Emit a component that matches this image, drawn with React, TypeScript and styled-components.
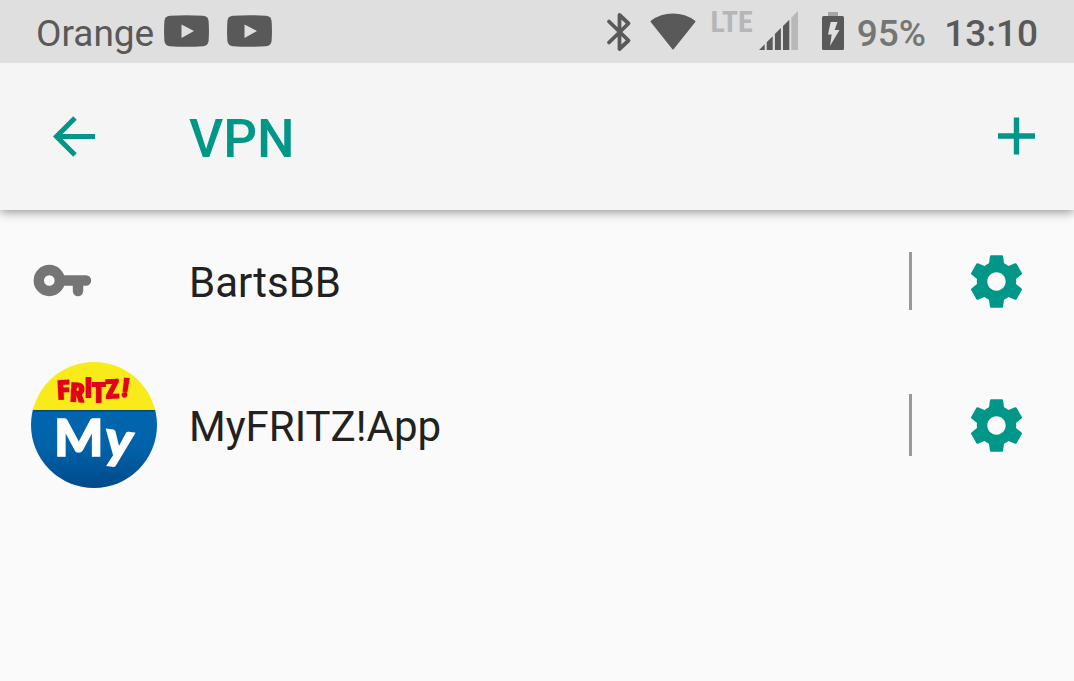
import React from 'react';
import styled, { createGlobalStyle } from 'styled-components';

const GlobalStyle = createGlobalStyle`
  * { box-sizing: border-box; }
  body {
    margin: 0;
    background: #fafafa;
    color: #212121;
    font-family: Roboto, "Liberation Sans", sans-serif;
  }
  svg { display: block; flex: none; }
`;

const StatusBar = styled.header`
  position: relative;
  z-index: 1;
  display: flex;
  align-items: center;
  justify-content: space-between;
  height: 63px;
  padding: 0 36px;
  background: #dfdfdf;
  color: #595959;
`;

const StatusGroup = styled.div<{ $gap: number }>`
  display: flex;
  align-items: center;
  gap: ${(p) => p.$gap}px;
`;

const StatusText = styled.span<{ $weight?: number; $color?: string }>`
  padding-top: 4px;
  font-size: 37px;
  line-height: 44px;
  font-weight: ${(p) => p.$weight ?? 500};
  color: ${(p) => p.$color ?? 'inherit'};
`;

const Carrier = styled(StatusText)`
  margin-right: 10px;
`;

const NetworkType = styled.span`
  align-self: flex-start;
  font-family: "Roboto Condensed", "Liberation Sans Narrow", Roboto, sans-serif;
  font-size: 30px;
  line-height: 22px;
  font-weight: 700;
  color: #b6b6b6;
`;

const Toolbar = styled.nav`
  display: flex;
  align-items: center;
  height: 147px;
  padding: 0 27px 0 44px;
  background: #f5f5f5;
  color: #009688;
  box-shadow: 0 2px 10px rgba(0, 0, 0, 0.42);
`;

const Title = styled.h1`
  flex: 1;
  margin: 0;
  padding: 4px 0 0 85px;
  font-size: 53px;
  line-height: 60px;
  font-weight: 500;
`;

const IconButton = styled.button`
  display: flex;
  align-items: center;
  justify-content: center;
  padding: 0;
  border: 0;
  background: none;
  color: #009688;
  cursor: pointer;
`;

const List = styled.ul`
  margin: 0;
  padding: 0;
  list-style: none;
`;

const Row = styled.li`
  display: flex;
  align-items: center;
  min-height: 142px;
  padding-right: 46px;
`;

const IconCell = styled.div`
  flex: none;
  width: 189px;
  padding: 10px 0 10px 31px;
`;

const Name = styled.span`
  flex: 1;
  padding-top: 4px;
  font-size: 42px;
  line-height: 50px;
`;

const Divider = styled.span`
  align-self: stretch;
  width: 3px;
  margin: 42px 53px 42px 0;
  background: #999;
`;

const YoutubeIcon = () => (
  <svg width="45" height="34" viewBox="0 0 45 34" aria-hidden="true">
    <path fill="#595959" d="M6 .8Q22 -.4 39 .8Q44 1.200 44.600 6Q45.300 16 44.600 26Q44 30.800 39 31.200Q22 32.400 6 31.200Q1 30.800 .4 26Q-.3 16 .4 6Q1 1.200 6 .8Z" />
    <path fill="#dfdfdf" d="M17.500 9.500L30 16L17.500 23Z" />
  </svg>
);

const BluetoothIcon = () => (
  <svg width="26" height="40" viewBox="0 0 26 40" aria-hidden="true" fill="none" stroke="#595959" strokeWidth="3.800" strokeLinecap="round" strokeLinejoin="round">
    <path d="M3 9.500L22.500 28.500L13.500 37V3L22.500 11.500L3 30.500" />
  </svg>
);

const WifiIcon = () => (
  <svg width="46" height="40" viewBox="0 0 46 40" aria-hidden="true">
    <path fill="#595959" stroke="#595959" strokeWidth="2" strokeLinejoin="round" d="M1.500 9.500Q11 2.500 23 2.500Q35 2.500 44.500 9.500L23 36.500Z" />
  </svg>
);

const SignalIcon = () => (
  <svg width="39" height="42" viewBox="0 0 39 42" aria-hidden="true">
    <path fill="#595959" d="M0 39L5.700 33.300V39ZM7.700 31.300L13.700 25.300V39H7.700ZM15.900 23.100L21.900 17.100V39H15.900ZM24 15L30.300 8.700V39H24Z" />
    <path fill="#b8b8b8" d="M32.300 6.700L39 0V39H32.300Z" />
  </svg>
);

const BatteryIcon = () => (
  <svg width="22" height="40" viewBox="0 0 22 40" aria-hidden="true">
    <path fill="#a6a6a6" d="M6 0H16V5H6Z" />
    <rect y="4" width="22" height="34" rx="1.500" fill="#595959" />
    <path fill="#dfdfdf" d="M8.700 10H15.500L12.700 18H17.500L8 34L9.700 22.500H6Z" />
  </svg>
);

const BackIcon = () => (
  <svg width="60" height="60" viewBox="0 0 60 60" aria-hidden="true" fill="none" stroke="currentColor" strokeWidth="5">
    <path d="M51 29.500H13M31 11L12.500 29.500L31 48" />
  </svg>
);

const PlusIcon = () => (
  <svg width="60" height="60" viewBox="0 0 60 60" aria-hidden="true" fill="none" stroke="currentColor" strokeWidth="5.400">
    <path d="M29.500 10.500V47.500M11 29H48" />
  </svg>
);

const GearIcon = () => (
  <svg width="63" height="63" viewBox="0 0 24 24" aria-hidden="true" fill="currentColor">
    <path d="M19.430 12.980c.04-.32.07-.64.07-.98s-.03-.66-.07-.98l2.110-1.650c.19-.15.24-.42.12-.64l-2-3.460c-.12-.22-.39-.3-.61-.22l-2.490 1c-.52-.4-1.080-.73-1.690-.98l-.38-2.650C14.460 2.180 14.250 2 14 2h-4c-.25 0-.46.18-.49.42l-.38 2.650c-.61.25-1.170.59-1.690.98l-2.490-1c-.23-.09-.49 0-.61.22l-2 3.460c-.13.22-.07.49.12.64l2.110 1.650c-.04.32-.07.65-.07.98s.03.66.07.98l-2.110 1.650c-.19.15-.24.42-.12.64l2 3.460c.12.22.39.3.61.22l2.490-1c.52.4 1.080.73 1.690.98l.38 2.650c.03.24.24.42.49.42h4c.25 0 .46-.18.49-.42l.38-2.650c.61-.25 1.170-.59 1.690-.98l2.490 1c.23.09.49 0 .61-.22l2-3.460c.12-.22.07-.49-.12-.64l-2.110-1.650zM12 15.500c-1.930 0-3.500-1.570-3.500-3.500s1.570-3.500 3.500-3.500 3.500 1.570 3.500 3.500-1.570 3.500-3.500 3.500z" />
  </svg>
);

const KeyIcon = () => (
  <svg width="63" height="34" viewBox="0 0 63 34" aria-hidden="true" fill="none" stroke="#757575" strokeWidth="10.400">
    <circle cx="18.300" cy="16.500" r="10.500" />
    <path strokeLinecap="round" d="M32 16.500H55M47 17V27" />
  </svg>
);

const MyFritzIcon = () => (
  <svg width="126" height="126" viewBox="0 0 126 126" role="img" aria-label="MyFRITZ!App">
    <defs>
      <clipPath id="disc"><circle cx="63" cy="63" r="63" /></clipPath>
      <linearGradient id="blue" x1="0" y1="0" x2="0" y2="1">
        <stop offset="0" stopColor="#003f7c" />
        <stop offset=".03" stopColor="#0066ae" />
        <stop offset=".45" stopColor="#0063aa" />
        <stop offset="1" stopColor="#004a8a" />
      </linearGradient>
    </defs>
    <g clipPath="url(#disc)">
      <rect width="126" height="48" fill="#f8eb19" />
      <rect y="48" width="126" height="78" fill="url(#blue)" />
    </g>
    <text fill="#e2001a" stroke="#e2001a" strokeWidth="2" fontFamily="'Liberation Sans Narrow', 'Roboto Condensed', sans-serif" fontWeight="700" fontSize="25" x="27 39 54 61 75 90" y="37 39 35 40 36 34" rotate="-3 3 0 0 -2 8">FRITZ!</text>
    <text fill="#fff" stroke="#fff" strokeWidth="1.500" fontFamily="Lato, sans-serif" fontWeight="900" fontSize="52" x="23 72" y="94 94" rotate="0 8">My</text>
  </svg>
);

const connections = [
  { name: 'BartsBB', icon: <KeyIcon /> },
  { name: 'MyFRITZ!App', icon: <MyFritzIcon /> },
];

export default function App() {
  return (
    <>
      <GlobalStyle />
      <StatusBar>
        <StatusGroup $gap={0}>
          <Carrier $weight={400}>Orange</Carrier>
          <StatusGroup $gap={18}>
            <YoutubeIcon />
            <YoutubeIcon />
          </StatusGroup>
        </StatusGroup>
        <StatusGroup $gap={24}>
          <StatusGroup $gap={18}>
            <BluetoothIcon />
            <StatusGroup $gap={14}>
              <WifiIcon />
              <StatusGroup $gap={6}>
                <NetworkType>LTE</NetworkType>
                <SignalIcon />
              </StatusGroup>
            </StatusGroup>
          </StatusGroup>
          <StatusGroup $gap={18}>
            <StatusGroup $gap={13}>
              <BatteryIcon />
              <StatusText $color="#757575">95%</StatusText>
            </StatusGroup>
            <StatusText>13:10</StatusText>
          </StatusGroup>
        </StatusGroup>
      </StatusBar>
      <Toolbar>
        <IconButton type="button" aria-label="Back"><BackIcon /></IconButton>
        <Title>VPN</Title>
        <IconButton type="button" aria-label="Add VPN"><PlusIcon /></IconButton>
      </Toolbar>
      <main>
        <List>
          {connections.map((c) => (
            <Row key={c.name}>
              <IconCell>{c.icon}</IconCell>
              <Name>{c.name}</Name>
              <Divider />
              <IconButton type="button" aria-label={`Settings for ${c.name}`}><GearIcon /></IconButton>
            </Row>
          ))}
        </List>
      </main>
    </>
  );
}
